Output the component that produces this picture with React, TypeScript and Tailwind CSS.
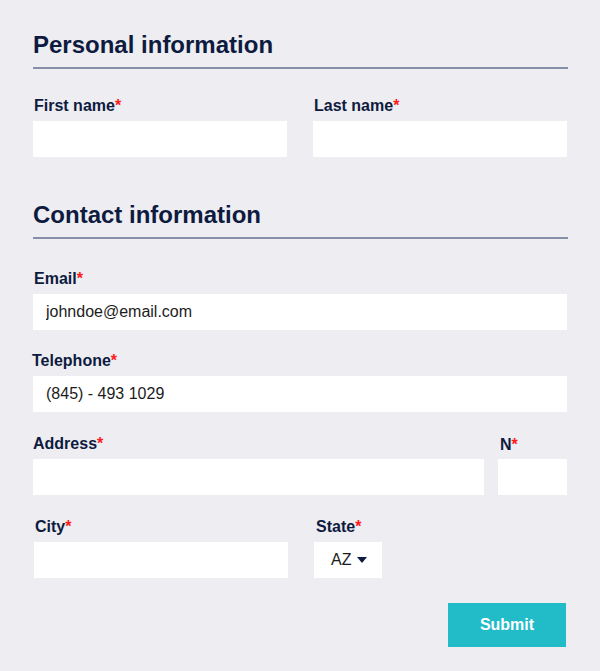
import { useState } from "react";

function Label({ text, className = "" }: { text: string; className?: string }) {
    return (
        <label className={`block text-[16px] leading-[20px] font-bold text-[#0e1b3f] mb-[5px] ${className}`}>
            {text}
            <span className="text-[#ff1a1a]">*</span>
        </label>
    );
}

function Field({ value = "", className = "" }: { value?: string; className?: string }) {
    const [val, setVal] = useState(value);
    return (
        <input
            value={val}
            onChange={(e) => setVal(e.target.value)}
            className={`block h-[36px] w-full bg-white pl-[13px] text-[16px] text-[#1c1c1c] outline-none border-0 ${className}`}
        />
    );
}

function SectionTitle({ title, className = "" }: { title: string; className?: string }) {
    return (
        <div className={className}>
            <h2 className="text-[24px] leading-[28px] font-bold text-[#0e1b3f]">{title}</h2>
            <div className="mt-2 h-[2px] bg-[#878ea8] -mr-px" />
        </div>
    );
}

export default function App() {
    return (
        <div
            className="min-h-[671px] w-full bg-[#ededf2] px-[33px] pt-[31px] pb-6"
            style={{ fontFamily: '"Liberation Sans", Arial, sans-serif' }}
        >
            <form className="flex flex-col" onSubmit={(e) => e.preventDefault()}>
                {/* Personal information */}
                <SectionTitle title="Personal information" />
                <div className="mt-[27px] grid grid-cols-2 gap-x-[26px]">
                    <div>
                        <Label text="First name" className="ml-px" />
                        <Field />
                    </div>
                    <div>
                        <Label text="Last name" className="ml-px" />
                        <Field />
                    </div>
                </div>

                {/* Contact information */}
                <SectionTitle title="Contact information" className="mt-[44px]" />
                <div className="mt-[30px]">
                    <Label text="Email" className="ml-px" />
                    <Field value="johndoe@email.com" />
                </div>
                <div className="mt-[21px]">
                    <Label text="Telephone" className="-ml-px" />
                    <Field value="(845) - 493 1029" />
                </div>
                <div className="mt-[22px] grid grid-cols-[1fr_69px] gap-x-[14px]">
                    <div>
                        <Label text="Address" />
                        <Field />
                    </div>
                    <div>
                        <Label text="N" className="ml-[2px] translate-y-px" />
                        <Field />
                    </div>
                </div>
                <div className="mt-[22px] flex gap-[26px] ml-px">
                    <div className="w-[254px]">
                        <Label text="City" className="ml-px" />
                        <Field />
                    </div>
                    <div className="w-[68px]">
                        <Label text="State" className="ml-[2px]" />
                        <div className="flex h-[36px] items-center bg-white pl-[17px] text-[16px] text-[#1c1c1c]">
                            <span>AZ</span>
                            <svg className="ml-[6px]" width="10" height="6" viewBox="0 0 10 6">
                                <path d="M0 0h10L5 6z" fill="#0e1b3f" />
                            </svg>
                        </div>
                    </div>
                </div>

                <button
                    type="submit"
                    className="mt-[25px] mr-px self-end h-[44px] w-[118px] bg-[#22bbc8] text-[16px] font-bold text-white"
                >
                    Submit
                </button>
            </form>
        </div>
    );
}
